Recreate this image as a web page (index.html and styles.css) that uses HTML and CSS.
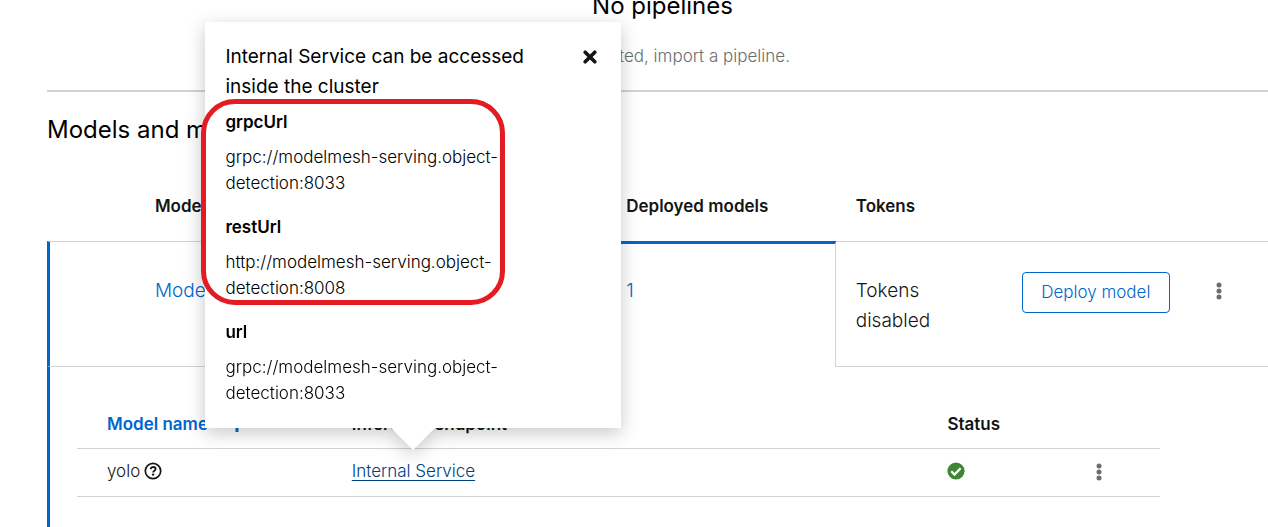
FILE: index.html
```html
<!DOCTYPE html>
<html lang="en">
<head>
<meta charset="utf-8">
<meta name="viewport" content="width=device-width, initial-scale=1">
<title>Models and model servers</title>
<link rel="stylesheet" href="styles.css">
</head>
<body>
<main class="page">
  <section class="empty-state">
    <h2 class="empty-title">No pipelines</h2>
    <p class="empty-body">To get started, import a pipeline.</p>
  </section>
  <section class="servers">
    <h2 class="section-title">Models and model servers</h2>
    <table class="server-table">
      <colgroup>
        <col class="col-toggle"><col class="col-server"><col class="col-runtime"><col class="col-deployed"><col class="col-tokens"><col class="col-deploy"><col class="col-menu">
      </colgroup>
      <thead>
        <tr>
          <td></td>
          <th scope="col" colspan="2">Model server name</th>
          <th scope="col">Deployed models</th>
          <th scope="col">Tokens</th>
          <td></td>
          <td></td>
        </tr>
      </thead>
      <tbody class="expanded">
        <tr class="server-row">
          <td></td>
          <td colspan="2"><a class="link" href="#server">Model server</a></td>
          <td class="cell-open"><a class="link" href="#deployed">1</a></td>
          <td>Tokens disabled</td>
          <td class="cell-action"><button class="deploy" type="button">Deploy model</button></td>
          <td class="cell-menu">
            <button class="icon-button" type="button" aria-label="Server actions">
              <svg class="kebab" viewBox="0 0 6 18"><circle cx="3" cy="3" r="2.5"/><circle cx="3" cy="9" r="2.5"/><circle cx="3" cy="15" r="2.5"/></svg>
            </button>
          </td>
        </tr>
        <tr>
          <td class="detail" colspan="7">
            <table class="model-table">
              <colgroup>
                <col class="col-model"><col class="col-endpoint"><col class="col-status"><col class="col-actions">
              </colgroup>
              <thead>
                <tr>
                  <th scope="col" aria-sort="ascending">
                    <button class="sort" type="button">Model name
                      <svg class="sort-icon" viewBox="0 0 10 17"><path d="M5 17V2M1 6l4-4 4 4" fill="none" stroke="currentColor" stroke-width="3"/></svg>
                    </button>
                  </th>
                  <th scope="col">Inference endpoint</th>
                  <th scope="col">Status</th>
                  <td></td>
                </tr>
              </thead>
              <tbody>
                <tr>
                  <td>
                    <span class="model-name">yolo
                      <button class="icon-button" type="button" aria-label="More info">
                        <svg class="round-icon" viewBox="0 0 18 18"><circle cx="9" cy="9" r="7.7" fill="none" stroke="#151515" stroke-width="1.7"/><path d="M6.5 7.1c.5-1.5 1.4-2.1 2.6-2.1 1.4 0 2.5.9 2.5 2.1 0 1.7-2.4 1.7-2.4 3.3" fill="none" stroke="#151515" stroke-width="1.9"/><circle cx="9.1" cy="12.6" r="1.2" fill="#151515"/></svg>
                      </button>
                    </span>
                  </td>
                  <td>
                    <span class="endpoint">
                      <a class="endpoint-link" href="#endpoint">Internal Service</a>
                      <div class="popover" role="dialog" aria-labelledby="popover-title">
                        <header class="popover-header">
                          <h3 class="popover-title" id="popover-title">Internal Service can be accessed inside the cluster</h3>
                          <button class="icon-button" type="button" aria-label="Close">
                            <svg class="close" viewBox="0 0 14 14"><path d="M2.2 2.2l9.6 9.6M11.8 2.2l-9.6 9.6" stroke="#151515" stroke-width="3.6" stroke-linecap="round"/></svg>
                          </button>
                        </header>
                        <dl class="urls highlighted">
                          <dt>grpcUrl</dt>
                          <dd>grpc://modelmesh-serving.object-<wbr>detection:8033</dd>
                          <dt>restUrl</dt>
                          <dd>http://modelmesh-serving.object-<wbr>detection:8008</dd>
                        </dl>
                        <dl class="urls">
                          <dt>url</dt>
                          <dd>grpc://modelmesh-serving.object-<wbr>detection:8033</dd>
                        </dl>
                      </div>
                    </span>
                  </td>
                  <td><svg class="round-icon" viewBox="0 0 18 18" role="img" aria-label="Ready"><circle cx="9" cy="9" r="8.6" fill="#3e8635"/><path d="M4.3 9.3l3.2 3.2 6.1-6.2" fill="none" stroke="#fff" stroke-width="2.3"/></svg></td>
                  <td>
                    <button class="icon-button" type="button" aria-label="Model actions">
                      <svg class="kebab" viewBox="0 0 6 18"><circle cx="3" cy="3" r="2.5"/><circle cx="3" cy="9" r="2.5"/><circle cx="3" cy="15" r="2.5"/></svg>
                    </button>
                  </td>
                </tr>
              </tbody>
            </table>
          </td>
        </tr>
      </tbody>
    </table>
  </section>
</main>
</body>
</html>
```
FILE: styles.css
```css
* {
  box-sizing: border-box;
}

body {
  margin: 0;
  overflow: hidden;
  background: #fff;
  color: #151515;
  font-family: Inter, "Open Sans", sans-serif;
  font-size: 17px;
  font-weight: 300;
  line-height: 26px;
}

h2, h3, p, dl, dd {
  margin: 0;
}

button {
  font: inherit;
  cursor: pointer;
}

svg {
  display: block;
}

.page {
  padding-left: 47px;
}

.empty-state {
  margin-top: -12px;
  padding: 0 0 21px 10px;
  border-bottom: 2px solid #d2d2d2;
  text-align: center;
}

.empty-title {
  margin-bottom: 19px;
  color: #000;
  font-size: 24px;
  font-weight: 400;
  line-height: 36px;
}

.empty-body {
  color: #6a6e73;
}

.section-title {
  padding: 20px 0 28px;
  color: #000;
  font-size: 24px;
  font-weight: 400;
  line-height: 36px;
}

table {
  width: 100%;
  border-collapse: separate;
  border-spacing: 0;
  table-layout: fixed;
}

th {
  font-weight: 600;
  text-align: left;
}

.col-toggle { width: 7.2%; }
.col-server { width: 19.3%; }
.col-runtime { width: 19.3%; }
.col-deployed { width: 18.8%; }
.col-tokens { width: 13.6%; }
.col-deploy { width: 15.4%; }
.col-menu { width: 6.4%; }

.server-table > thead th {
  height: 65px;
  padding: 0 20px 5px;
}

.server-row > td {
  height: 126px;
  padding: 34px 20px 30px;
  border-top: 1px solid #d2d2d2;
  border-bottom: 1px solid #d2d2d2;
  font-size: 19px;
  line-height: 30px;
  vertical-align: top;
}

.expanded > tr > td:first-child {
  border-left: 3px solid #06c;
}

.server-row > .cell-open {
  padding-top: 32px;
  border-top: 3px solid #06c;
  border-right: 1px solid #d2d2d2;
  border-bottom: 0;
}

.link {
  color: #06c;
  text-decoration: none;
}

.server-row > .cell-action {
  padding-top: 30px;
}

.deploy {
  width: 100%;
  padding: 6px 0;
  border: 1px solid #06c;
  border-radius: 4px;
  background: #fff;
  color: #06c;
  font-size: 17px;
  line-height: 27px;
  white-space: nowrap;
}

.server-row > .cell-menu {
  padding-top: 33px;
}

.icon-button {
  padding: 0;
  border: 0;
  background: none;
  vertical-align: middle;
}

.kebab {
  width: 6px;
  height: 18px;
  margin-left: 6px;
  fill: #6a6e73;
}

.detail {
  padding: 33px 108px 30px 27px;
}

.col-model { width: 22.6%; }
.col-endpoint { width: 55%; }
.col-status { width: 13.2%; }
.col-actions { width: 9.2%; }

.model-table td,
.model-table th {
  height: 48px;
  padding: 0 30px;
  border-bottom: 1px solid #d2d2d2;
}

.model-table > thead th {
  height: 49px;
  padding-bottom: 1px;
}

.model-table > tbody td {
  padding-bottom: 3px;
}

.sort {
  display: flex;
  align-items: center;
  gap: 24px;
  padding: 0;
  border: 0;
  background: none;
  color: #06c;
  white-space: nowrap;
}

.sort-icon {
  width: 10px;
  height: 17px;
}

.model-name {
  display: flex;
  align-items: center;
  gap: 4px;
}

.round-icon {
  width: 18px;
  height: 18px;
}

.endpoint {
  display: inline-block;
  position: relative;
}

.endpoint-link {
  color: #004080;
  text-underline-offset: 3px;
}

.popover {
  position: absolute;
  bottom: calc(100% + 30px);
  left: 50%;
  width: 416px;
  padding: 20px 20px 11px;
  background: #fff;
  color: #000;
  filter: drop-shadow(0 5px 9px rgba(3, 3, 3, 0.22));
  transform: translateX(-50%);
}

.popover::after {
  content: "";
  position: absolute;
  top: 100%;
  left: 50%;
  border: 22px solid transparent;
  border-top-color: #fff;
  border-bottom: 0;
  transform: translateX(-50%);
}

.popover-header {
  display: flex;
  align-items: flex-start;
  justify-content: space-between;
  gap: 40px;
}

.popover-header .icon-button {
  padding: 8px 4px;
}

.popover-title {
  flex: 1;
  font-size: 19px;
  font-weight: 400;
  line-height: 30px;
}

.close {
  width: 14px;
  height: 14px;
}

.urls {
  position: relative;
  width: 280px;
}

.urls dt {
  padding: 6px 0 8px;
  font-weight: 600;
  line-height: 28px;
}

.urls dd {
  padding-bottom: 11px;
}

.highlighted::after {
  content: "";
  position: absolute;
  inset: -3px 0 7px -24px;
  border: 5px solid #e31b23;
  border-radius: 34px;
}
```
